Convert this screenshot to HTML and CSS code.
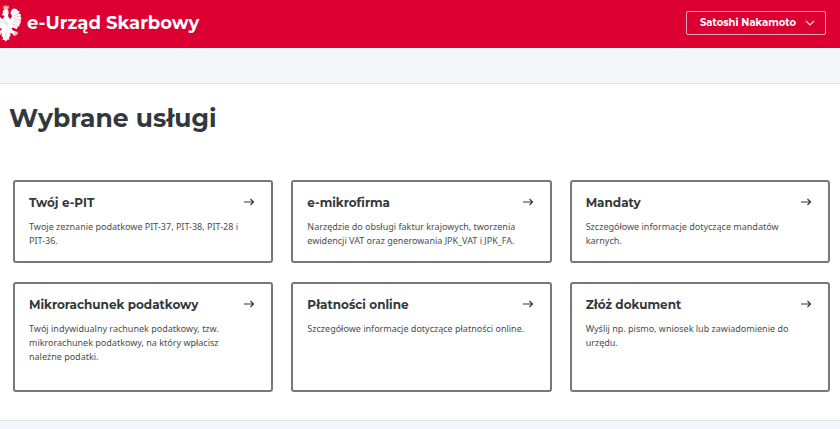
FILE: index.html
```html
<!DOCTYPE html>
<html lang="pl">
<head>
<meta charset="utf-8">
<meta name="viewport" content="width=device-width, initial-scale=1">
<title>e-Urząd Skarbowy</title>
<link rel="stylesheet" href="styles.css">
</head>
<body>
<svg class="symbols" aria-hidden="true">
  <symbol id="arrow" viewBox="0 0 12 10"><path d="M1 5h10M7.500 2 10.500 5 7.500 8"/></symbol>
</svg>
<header class="topbar">
  <a class="brand" href="#">
    <svg class="eagle" viewBox="0 0 22 38" aria-hidden="true">
      <path fill="#fff" d="M3 9C2 7 4 5 6 5s3 2 2.500 4L8 12l1.500 2.500H11l1-2.500-1.500-3 1-3 2-1.500 3 .500 1 1.500 2 1-.500 2 2 1-.500 2 1 2-1 2 .500 2-1.500 1.500 0 2-2 1-.500 2-2-.500L14 24l-1.500-.500-1 1 1.500 2 4 1.500 1-.500-1 3-3 1.500-1-2-3-1 .500 3-1.500 1 .500 2.500-2 0-1.500 2L4.500 36l-2 0 .500-2.500L1.500 32l.500-3-2 2v-4l2-2-2-1V13l2 2 1.500-1L4.500 12 3 11l-1.500 1z"/>
      <path class="feathers" d="M14 12l5-3M14 14l6-2M14 16l7-1M13 18h7M12 20l6 2M0 17l2 2M5 16v4M7 18v4M6 28v6"/>
      <path class="gold" d="M3.500 5 3 1.500l2 1L6 .500l1 2 2-1L8.500 5zM13.500 29l3-1 1.500 1.500-2 2zM1 29l-1 2v-3z"/>
    </svg>
    <span>e-Urząd Skarbowy</span>
  </a>
  <button class="user" type="button">Satoshi Nakamoto
    <svg class="chevron" viewBox="0 0 10 6" aria-hidden="true"><path d="M1 1l4 4 4-4"/></svg>
  </button>
</header>
<main class="services">
  <h1>Wybrane usługi</h1>
  <div class="grid">
    <a class="card" href="#">
      <h2>Twój e-PIT</h2><svg class="arrow" aria-hidden="true"><use href="#arrow"/></svg>
      <p>Twoje zeznanie podatkowe PIT-37, PIT-38, PIT-28 i PIT-36.</p>
    </a>
    <a class="card" href="#">
      <h2>e-mikrofirma</h2><svg class="arrow" aria-hidden="true"><use href="#arrow"/></svg>
      <p>Narzędzie do obsługi faktur krajowych, tworzenia ewidencji VAT oraz generowania JPK_VAT i JPK_FA.</p>
    </a>
    <a class="card" href="#">
      <h2>Mandaty</h2><svg class="arrow" aria-hidden="true"><use href="#arrow"/></svg>
      <p>Szczegółowe informacje dotyczące mandatów karnych.</p>
    </a>
    <a class="card" href="#">
      <h2>Mikrorachunek podatkowy</h2><svg class="arrow" aria-hidden="true"><use href="#arrow"/></svg>
      <p>Twój indywidualny rachunek podatkowy, tzw. mikrorachunek podatkowy, na który wpłacisz należne podatki.</p>
    </a>
    <a class="card" href="#">
      <h2>Płatności online</h2><svg class="arrow" aria-hidden="true"><use href="#arrow"/></svg>
      <p>Szczegółowe informacje dotyczące płatności online.</p>
    </a>
    <a class="card" href="#">
      <h2>Złóż dokument</h2><svg class="arrow" aria-hidden="true"><use href="#arrow"/></svg>
      <p>Wyślij np. pismo, wniosek lub zawiadomienie do urzędu.</p>
    </a>
  </div>
</main>
</body>
</html>
```
FILE: styles.css
```css
* { box-sizing: border-box; }
body {
  margin: 0;
  background: #f4f6fa;
  color: #33383c;
  font-family: "Noto Sans", "Open Sans", sans-serif;
}
h1, h2, p { margin: 0; }
a { color: inherit; text-decoration: none; }
svg { fill: none; }
.symbols { display: none; }
.topbar {
  display: flex;
  align-items: center;
  justify-content: space-between;
  height: 48px;
  padding: 0 14px 2px 0;
  background: #dc0032;
  color: #fff;
}
.brand {
  display: flex;
  align-items: center;
  gap: 5px;
  font: 700 18px/24px Montserrat, Inter, sans-serif;
}
.eagle { width: 22px; height: 38px; }
.feathers { stroke: #e88a9c; stroke-width: .5; }
.gold { fill: #f3b58a; }
.user {
  display: flex;
  align-items: center;
  gap: 9px;
  height: 24px;
  padding: 0 10px 0 13px;
  border: 1px solid #f6a5b5;
  border-radius: 2px;
  background: none;
  color: #fff;
  font: 700 10px/16px Montserrat, Inter, sans-serif;
}
.chevron { width: 10px; height: 6px; stroke: #fbd0d8; stroke-width: 1.2; }
.services {
  margin-top: 35px;
  padding: 16px 10px 28px 13px;
  border: solid #dfe1e4;
  border-width: 1px 0;
  background: #fff;
}
h1 {
  margin: 0 0 44px -4px;
  font: 700 25px/36px Montserrat, Inter, sans-serif;
}
.grid {
  display: grid;
  grid-template-columns: repeat(3, 1fr);
  grid-template-rows: auto minmax(110px, auto);
  gap: 19px 18px;
}
.card {
  display: grid;
  grid-template-columns: 1fr auto;
  align-content: start;
  gap: 8px;
  padding: 12px 16px 13px 14px;
  border: 2px solid #77787a;
  border-radius: 3px;
}
h2 { font: 700 12px/18px Montserrat, Inter, sans-serif; }
.arrow { width: 12px; height: 10px; margin-top: 3px; stroke: #33383c; stroke-width: 1.2; }
.card p {
  grid-column: 1 / -1;
  padding-right: 8px;
  color: #4a4e52;
  font-size: 9px;
  line-height: 14px;
}
```
